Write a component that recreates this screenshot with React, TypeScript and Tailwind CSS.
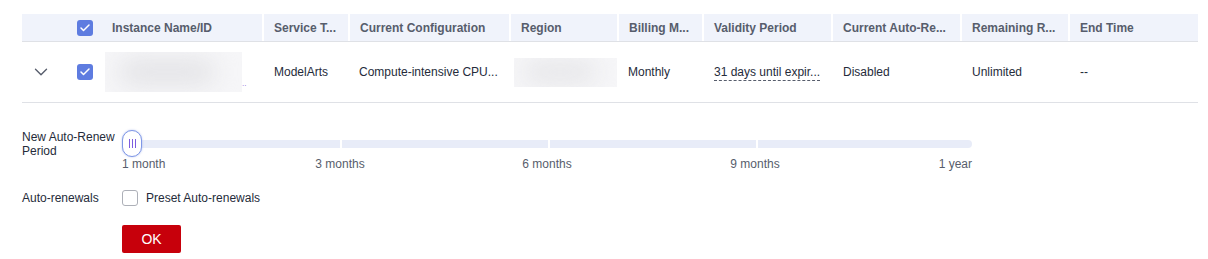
import { ChevronDown, Check } from 'lucide-react'

const cols = 'grid grid-cols-[55px_28px_157px_86px_161px_108px_85px_129px_129px_108px_130px]'

const heads = ['Service T...', 'Current Configuration', 'Region', 'Billing M...', 'Validity Period', 'Current Auto-Re...', 'Remaining R...', 'End Time']

function Box({ checked }: { checked: boolean }) {
  if (checked) return (
    <span className="w-4 h-4 rounded-[3px] bg-[#5e7ce0] flex items-center justify-center">
      <Check size={12} strokeWidth={3} color="#fff" />
    </span>
  )
  return <span className="w-4 h-4 rounded-[3px] border border-[#adb0b8] bg-white" />
}

function Blur({ w, h }: { w: number; h: number }) {
  return (
    <div className="relative overflow-hidden bg-[#f6f6f8]" style={{ width: w, height: h }}>
      <div className="absolute left-[10%] top-[20%] w-[70%] h-[60%] rounded-full bg-[#e2e2e5] blur-md" />
    </div>
  )
}

export default function App() {
  const marks = [
    { label: '3 months', x: 218 },
    { label: '6 months', x: 425 },
    { label: '9 months', x: 633 },
  ]
  return (
    <div className="w-[1208px] h-[259px] bg-white text-[12px] text-[#252b3a]" style={{ fontFamily: '"Liberation Sans", Arial, sans-serif' }}>
      <div className="pt-[14px] pl-[22px] pr-[10px]">
        {/* header */}
        <div className={`${cols} h-[28px] bg-[#f0f3fb] border-b border-[#dfe1e6] font-bold text-[#575d6c]`}>
          <div />
          <div className="flex items-center"><Box checked /></div>
          <div className="flex items-center pl-[7px]">Instance Name/ID</div>
          {heads.map(h => (
            <div key={h} className="flex items-center pl-[10px] border-l-2 border-white whitespace-nowrap">{h}</div>
          ))}
        </div>
        {/* row */}
        <div className={`${cols} h-[61px] border-b border-[#dfe1e6]`}>
          <div className="flex items-center pl-[8px]">
            <ChevronDown size={22} strokeWidth={1.5} color="#575d6c" />
          </div>
          <div className="flex items-center"><Box checked /></div>
          <div className="flex items-center">
            <Blur w={137} h={40} />
            <span className="self-end mb-[14px] text-[8px] text-[#8a6ad6] leading-none">..</span>
          </div>
          <div className="flex items-center pl-3">ModelArts</div>
          <div className="flex items-center pl-[11px] whitespace-nowrap">Compute-intensive CPU...</div>
          <div className="flex items-center pl-[5px]"><Blur w={103} h={29} /></div>
          <div className="flex items-center pl-[11px]">Monthly</div>
          <div className="flex items-center pl-3">
            <span className="border-b border-dashed border-[#575d6c] leading-[16px] whitespace-nowrap">31 days until expir...</span>
          </div>
          <div className="flex items-center pl-3">Disabled</div>
          <div className="flex items-center pl-3">Unlimited</div>
          <div className="flex items-center pl-3">--</div>
        </div>

        {/* form */}
        <div className="mt-[27px] flex">
          <div className="w-[100px] leading-[14px]">New Auto-Renew<br />Period</div>
          <div className="relative w-[850px] h-[40px]">
            <div className="absolute left-0 right-0 top-[10px] h-[8px] flex gap-[2px]">
              <div className="w-[218px] bg-[#e8ecf8]" />
              <div className="w-[206px] bg-[#e8ecf8]" />
              <div className="w-[206px] bg-[#e8ecf8]" />
              <div className="w-[214px] bg-[#e8ecf8] rounded-r-sm" />
            </div>
            <div className="absolute left-0 top-0 w-[20px] h-[27px] rounded-full border border-[#7f97e6] bg-white flex items-center justify-center gap-[2px] shadow-[0_0_2px_rgba(94,124,224,0.5)]">
              <span className="w-px h-[9px] bg-[#7d5ce0]" />
              <span className="w-px h-[9px] bg-[#7d5ce0]" />
              <span className="w-px h-[9px] bg-[#7d5ce0]" />
            </div>
            <span className="absolute left-0 top-[25px] text-[#575d6c] whitespace-nowrap">1 month</span>
            {marks.map(m => (
              <span key={m.label} className="absolute top-[25px] -translate-x-1/2 text-[#575d6c] whitespace-nowrap" style={{ left: m.x }}>{m.label}</span>
            ))}
            <span className="absolute right-0 top-[25px] text-[#575d6c] whitespace-nowrap">1 year</span>
          </div>
        </div>

        <div className="mt-[20px] flex items-center h-[16px]">
          <div className="w-[100px]">Auto-renewals</div>
          <Box checked={false} />
          <span className="ml-[8px]">Preset Auto-renewals</span>
        </div>

        <div className="mt-[19px] pl-[100px]">
          <button className="w-[59px] h-[28px] rounded-[2px] bg-[#c7000b] text-white text-[14px]">OK</button>
        </div>
      </div>
    </div>
  )
}
